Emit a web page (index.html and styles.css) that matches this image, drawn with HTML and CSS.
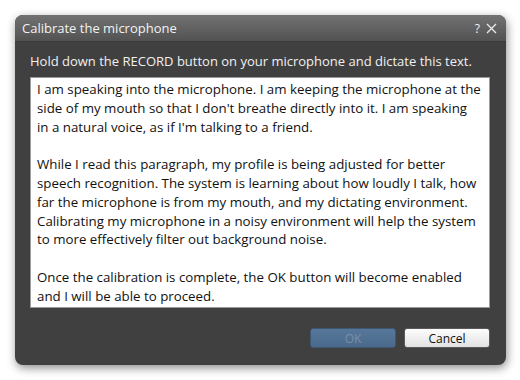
FILE: index.html
```html
<!DOCTYPE html>
<html lang="en">
<head>
    <meta charset="UTF-8">
    <title>Calibrate the microphone</title>
    <link rel="stylesheet" href="styles.css">
</head>
<body>
    <div class="dialog">
        <!-- Title bar -->
        <div class="titlebar">
            <span class="title">Calibrate the microphone</span>
            <div class="title-buttons">
                <span class="help">?</span>
                <svg class="close" width="11" height="11" viewBox="0 0 11 11">
                    <path d="M1 1 L10 10 M10 1 L1 10" stroke="#e8e8e8" stroke-width="1.4" fill="none"/>
                </svg>
            </div>
        </div>

        <div class="body">
            <p class="instruction">Hold down the RECORD button on your microphone and dictate this text.</p>

            <div class="textbox">
                <p>I am speaking into the microphone. I am keeping the microphone at the<br>
                side of my mouth so that I don't breathe directly into it. I am speaking<br>
                in a natural voice, as if I'm talking to a friend.</p>
                <p>While I read this paragraph, my profile is being adjusted for better<br>
                speech recognition. The system is learning about how loudly I talk, how<br>
                far the microphone is from my mouth, and my dictating environment.<br>
                Calibrating my microphone in a noisy environment will help the system<br>
                to more effectively filter out background noise.</p>
                <p>Once the calibration is complete, the OK button will become enabled<br>
                and I will be able to proceed.</p>
            </div>

            <div class="actions">
                <button class="btn btn-ok" disabled>OK</button>
                <button class="btn btn-cancel">Cancel</button>
            </div>
        </div>
    </div>
</body>
</html>
```

FILE: styles.css
```css
/* Page */
body {
    margin: 0;
    padding: 15px;
    background-color: #fff;
    font-family: "Open Sans", "Noto Sans", sans-serif;
}

/* Dialog frame */
.dialog {
    width: 491px;
    height: 350px;
    background-color: #404040;
    border-radius: 8px;
    box-shadow: 1px 3px 10px rgba(0, 0, 0, 0.45);
    display: flex;
    flex-direction: column;
    overflow: hidden;
}

.titlebar {
    height: 26px;
    background: linear-gradient(#727272, #525252);
    border-bottom: 1px solid #3a3a3a;
    display: flex;
    align-items: center;
    justify-content: space-between;
    padding: 0 9px 0 7px;
    color: #f2f2f2;
}

.title {
    font-size: 13px;
}

.title-buttons {
    display: flex;
    align-items: center;
    gap: 6px;
}

.help {
    font-size: 12px;
}

/* Content */
.body {
    flex: 1;
    display: flex;
    flex-direction: column;
    padding: 0 16px 0 15px;
}

.instruction {
    margin: 10px 0 7px;
    color: #f0f0f0;
    font-size: 13px;
}

.textbox {
    height: 217px;
    background-color: #fff;
    border: 1px solid #9a9a9a;
    padding: 2px 6px 10px;
    color: #111;
    font-size: 13.3px;
    line-height: 18.8px;
    white-space: nowrap;
}

.textbox p {
    margin: 0 0 18.8px;
}

.actions {
    display: flex;
    justify-content: flex-end;
    gap: 8px;
    margin-top: 20px;
}

.btn {
    width: 86px;
    height: 20px;
    border-radius: 3px;
    font-family: inherit;
    font-size: 12px;
    padding: 0;
}

.btn-ok {
    background: linear-gradient(#56779a, #4a6a8c);
    border: 1px solid #3e5872;
    color: #7b8ea3;
}

.btn-cancel {
    background: linear-gradient(#fdfdfd, #e2e2e2);
    border: 1px solid #5a5a5a;
    color: #111;
}
```
